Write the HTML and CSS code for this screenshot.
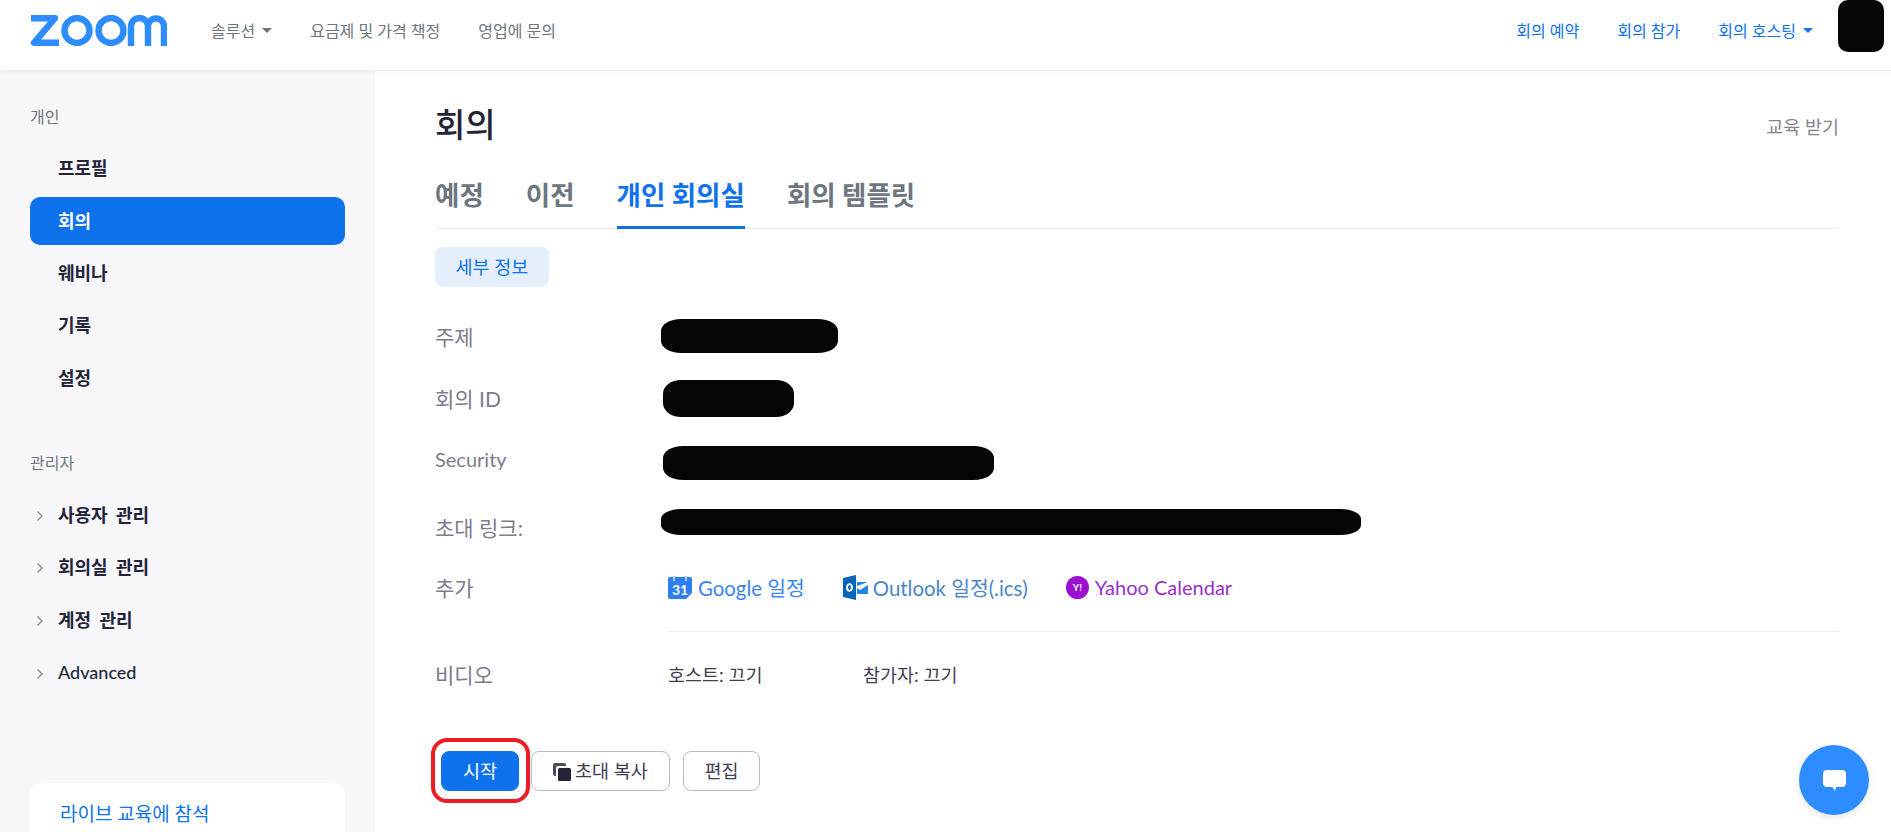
FILE: index.html
```html
<!DOCTYPE html>
<html lang="ko">
<head>
<meta charset="utf-8">
<title>회의</title>
<link rel="stylesheet" href="styles.css">
</head>
<body>
<header class="topbar">
  <svg class="logo" viewBox="0 0 137 31" aria-label="zoom">
    <path class="logo-z" d="M1 3.200H25L4 27.800H29"/>
    <circle class="logo-o" cx="47" cy="15.500" r="12.500"/>
    <circle class="logo-o" cx="81" cy="15.500" r="12.500"/>
    <path class="logo-m" d="M101 31V11.500a8.500 8.500 0 0 1 17 0V31M118 11.500a8 8 0 0 1 16 0V31"/>
  </svg>
  <nav class="nav-left">
    <a class="nav-item">솔루션<span class="caret"></span></a>
    <a class="nav-item">요금제 및 가격 책정</a>
    <a class="nav-item">영업에 문의</a>
  </nav>
  <nav class="nav-right">
    <a class="nav-link">회의 예약</a>
    <a class="nav-link">회의 참가</a>
    <a class="nav-link">회의 호스팅<span class="caret caret-blue"></span></a>
    <div class="avatar"></div>
  </nav>
</header>
<div class="layout">
  <aside class="sidebar">
    <div class="side-label">개인</div>
    <ul class="side-list side-personal">
      <li class="side-item">프로필</li>
      <li class="side-item active">회의</li>
      <li class="side-item">웨비나</li>
      <li class="side-item">기록</li>
      <li class="side-item">설정</li>
    </ul>
    <div class="side-label admin">관리자</div>
    <ul class="side-list side-admin">
      <li class="side-item expand"><svg class="chev" viewBox="0 0 8 12"><path d="M1.500 1.500 6 6l-4.500 4.500"/></svg>사용자 관리</li>
      <li class="side-item expand"><svg class="chev" viewBox="0 0 8 12"><path d="M1.500 1.500 6 6l-4.500 4.500"/></svg>회의실 관리</li>
      <li class="side-item expand"><svg class="chev" viewBox="0 0 8 12"><path d="M1.500 1.500 6 6l-4.500 4.500"/></svg>계정 관리</li>
      <li class="side-item expand latin"><svg class="chev" viewBox="0 0 8 12"><path d="M1.500 1.500 6 6l-4.500 4.500"/></svg>Advanced</li>
    </ul>
    <div class="train-card">라이브 교육에 참석</div>
  </aside>
  <main class="main">
    <div class="title-row">
      <h1 class="title">회의</h1>
      <a class="training">교육 받기</a>
    </div>
    <div class="tabs">
      <a class="tab">예정</a>
      <a class="tab">이전</a>
      <a class="tab current">개인 회의실</a>
      <a class="tab">회의 템플릿</a>
    </div>
    <div class="pill">세부 정보</div>
    <div class="row r-topic"><div class="label">주제</div><div class="blob b-topic"></div></div>
    <div class="row r-id"><div class="label">회의 ID</div><div class="blob b-id"></div></div>
    <div class="row r-sec"><div class="label">Security</div><div class="blob b-sec"></div></div>
    <div class="row r-link"><div class="label">초대 링크:</div><div class="blob b-link"></div></div>
    <div class="row r-add">
      <div class="label">추가</div>
      <div class="cal-links">
        <a class="cal cal-g"><svg class="icon-g" viewBox="0 0 24 23"><path fill="#2d7ff0" d="M2 1h20a2 2 0 0 1 2 2v14l-6 6H2a2 2 0 0 1-2-2V3a2 2 0 0 1 2-2z"/><path fill="#a9ccf8" d="M5 0h2v5H5zM17 0h2v5h-2z"/><text x="12" y="19" class="cal-num">31</text></svg>Google 일정</a>
        <a class="cal cal-o"><svg class="icon-o" viewBox="0 0 25 25"><path fill="#0364b8" d="M0 3 13 0v25L0 22z"/><path fill="#1f86e0" d="M14 7h11v12H14z"/><path fill="#fff" d="M14 11 25 7v3l-8 5-3-2z"/><ellipse cx="6.500" cy="12.500" rx="2.400" ry="3.400" fill="none" stroke="#fff" stroke-width="1.900"/></svg>Outlook 일정(.ics)</a>
        <a class="cal cal-y"><svg class="icon-y" viewBox="0 0 23 23"><circle cx="11.500" cy="11.500" r="11.500" fill="#9a0fd0"/><text x="11.500" y="15" class="cal-y-mark">Y!</text></svg>Yahoo Calendar</a>
      </div>
    </div>
    <hr class="divider">
    <div class="row r-video">
      <div class="label">비디오</div>
      <div class="video-vals"><span class="v-host">호스트: 끄기</span><span>참가자: 끄기</span></div>
    </div>
    <div class="actions">
      <div class="start-wrap">
        <button class="btn btn-primary">시작</button>
        <span class="red-ring"></span>
      </div>
      <button class="btn btn-copy"><svg class="copy-icon" viewBox="0 0 18 18"><path fill="#4b4b5c" d="M2 0h9a2 2 0 0 1 2 2v1H5a2 2 0 0 0-2 2v8H2a2 2 0 0 1-2-2V2a2 2 0 0 1 2-2z"/><rect x="5" y="5" width="13" height="13" rx="1.500" fill="#23233a"/></svg>초대 복사</button>
      <button class="btn btn-edit">편집</button>
    </div>
    <div class="chat"><svg viewBox="0 0 23 21" class="chat-icon"><path fill="#fff" d="M4 0h15a4 4 0 0 1 4 4v9a4 4 0 0 1-4 4h-5.500l-2 4-2-4H4a4 4 0 0 1-4-4V4a4 4 0 0 1 4-4z"/></svg></div>
  </main>
</div>
</body>
</html>
```

FILE: styles.css
```css
* { box-sizing: border-box; }
html, body { margin: 0; height: 100%; overflow: hidden; }
body {
  font-family: Lato, "Noto Sans CJK KR", sans-serif;
  color: #23233a;
  background: #fff;
  height: 832px;
}
.topbar {
  height: 71px;
  display: flex;
  align-items: center;
  padding: 0 7px 11px 30px;
  background: #fff;
  border-bottom: 1px solid #ededf2;
  box-shadow: 0 1px 3px rgba(0,0,0,.04);
  position: relative;
}
.logo { width: 137px; height: 31px; margin-right: 44px; flex: none; margin-top: 2px; }
.logo-z, .logo-o, .logo-m { fill: none; stroke: #2d8cff; stroke-width: 6.400; }
.logo-z { stroke-linejoin: round; stroke-linecap: butt; }
.nav-left { display: flex; gap: 38px; align-items: center; }
.nav-item { font-size: 16px; color: #6e7680; display: flex; align-items: center; }
.caret {
  width: 0; height: 0; margin-left: 7px; margin-top: 2px;
  border: 5px solid transparent; border-bottom: 0; border-top: 5px solid #6e7680;
}
.caret-blue { border-top-color: #0e72ed; }
.nav-right { margin-left: auto; display: flex; gap: 38px; align-items: center; }
.nav-link { font-size: 16px; color: #0e72ed; display: flex; align-items: center; }
.avatar { width: 46px; height: 52px; border-radius: 10px; background: #050505; margin: 0 0 7px -13px; }
.layout { display: flex; height: 761px; }
.sidebar {
  width: 375px; flex: none; background: #f7f7fa; padding: 36px 30px 0; overflow: hidden;
}
.side-label { font-size: 16px; color: #6e7680; line-height: 20px; }
.side-label.admin { margin-top: 52.500px; }
.side-list { list-style: none; padding: 0; display: flex; flex-direction: column; }
.side-personal { margin: 15.500px 0 0; gap: 4.500px; }
.side-admin { margin: 16.500px 0 0; gap: 4.700px; }
.side-item {
  height: 48px; border-radius: 10px; padding-left: 28px; display: flex; align-items: center;
  font-size: 18px; font-weight: 700; color: #23233a; position: relative; word-spacing: 4px;
}
.side-item.active { background: #0e72ed; color: #fff; margin: 1.500px 0 -1.500px; padding-bottom: 2px; }
.side-item.latin { font-weight: 500; }
.chev { width: 8px; height: 12px; position: absolute; left: 6px; top: 20px; fill: none; stroke: #8a8a96; stroke-width: 1.400; }
.train-card {
  margin-top: 87px; background: #fff; border-radius: 12px; height: 90px; padding: 16px 30px;
  font-size: 19px; color: #0e72ed;
}
.main { flex: 1; padding: 31px 52px 0 60px; position: relative; min-width: 0; }
.title-row { display: flex; justify-content: space-between; align-items: center; height: 44px; }
.title { margin: 0; font-size: 33px; font-weight: 500; color: #23233a; line-height: 44px; }
.training { font-size: 18.500px; color: #85858f; margin-top: 4px; }
.tabs { display: flex; gap: 42px; margin-top: 21px; border-bottom: 1px solid #ededf2; height: 62px; align-items: stretch; }
.tab { font-size: 26.500px; font-weight: 700; color: #6e7680; line-height: 56px; height: 62px; }
.tab.current { color: #0e72ed; border-bottom: 3px solid #0e72ed; }
.pill {
  margin-top: 18px; width: 114px; height: 40px; border-radius: 8px; background: #e5effc;
  color: #0e72ed; font-size: 18.500px; font-weight: 400; padding-bottom: 2px; display: flex; align-items: center; justify-content: center;
}
.row { display: flex; align-items: center; }
.label { width: 226px; flex: none; font-size: 21px; color: #7c7c8c; }
.r-topic { margin-top: 24px; height: 50px; }
.r-id { margin-top: 12px; height: 50px; }
.r-sec { margin-top: 11px; height: 50px; }
.r-sec .label { font-size: 20px; }
.r-link { margin-top: 18px; height: 50px; }
.r-add { margin-top: 10px; height: 50px; }
.r-video { margin-top: 17px; height: 50px; }
.blob { background: #050505; border-radius: 20px / 12px; }
.b-topic { width: 177px; height: 34px; }
.b-id { width: 131px; height: 37px; margin-left: 2px; border-radius: 18px / 14px; }
.b-sec { width: 331px; height: 34px; margin: 7px 0 0 2px; }
.b-link { width: 700px; height: 26px; margin-top: -10px; border-radius: 20px / 10px; }
.cal-links { display: flex; gap: 38px; margin-left: 7px; }
.cal { display: flex; align-items: center; font-size: 20.400px; color: #3d85f0; }
.cal-o { color: #4a86c8; }
.cal-y { color: #9a2fc9; font-size: 20px; }
.icon-g { width: 24px; height: 23px; margin-right: 6px; flex: none; }
.icon-o { width: 25px; height: 25px; margin-right: 5px; flex: none; }
.icon-y { width: 23px; height: 23px; margin-right: 6px; flex: none; }
.cal-num { font: 700 14px Lato, sans-serif; fill: #fff; text-anchor: middle; }
.cal-y-mark { font: 700 10px Lato, sans-serif; fill: #fff; text-anchor: middle; }
.divider { margin: 19px 0 0 233px; border: 0; border-top: 1px solid #ededf2; }
.video-vals { display: flex; margin-left: 7px; font-size: 18.500px; color: #3f3f52; }
.v-host { width: 195px; }
.actions { display: flex; gap: 12px; margin-top: 52px; align-items: center; }
.start-wrap { position: relative; margin-left: 6px; display: flex; }
.btn {
  height: 40px; border-radius: 8px; border: 1px solid #babac4; background: #fff;
  font-family: Lato, "Noto Sans CJK KR", sans-serif; font-size: 18.500px; color: #3f3f52; padding: 0 0 3px;
  display: flex; align-items: center; justify-content: center;
}
.btn-primary { width: 78px; background: #0e72ed; border-color: #0e72ed; color: #fff; }
.btn-copy { width: 139px; }
.btn-edit { width: 77px; margin-left: 1px; }
.copy-icon { width: 18px; height: 18px; margin: 4px 4px 0 0; }
.red-ring {
  position: absolute; left: -10px; top: -13px; width: 99px; height: 65px;
  border: 4px solid #ed1c24; border-radius: 16px; pointer-events: none;
}
.chat {
  position: absolute; left: 1424px; top: 674px; width: 70px; height: 70px; border-radius: 50%;
  background: #2d8cff; display: flex; align-items: center; justify-content: center;
  box-shadow: 0 2px 8px rgba(0,0,0,.12);
}
.chat-icon { width: 23px; height: 21px; }
```
